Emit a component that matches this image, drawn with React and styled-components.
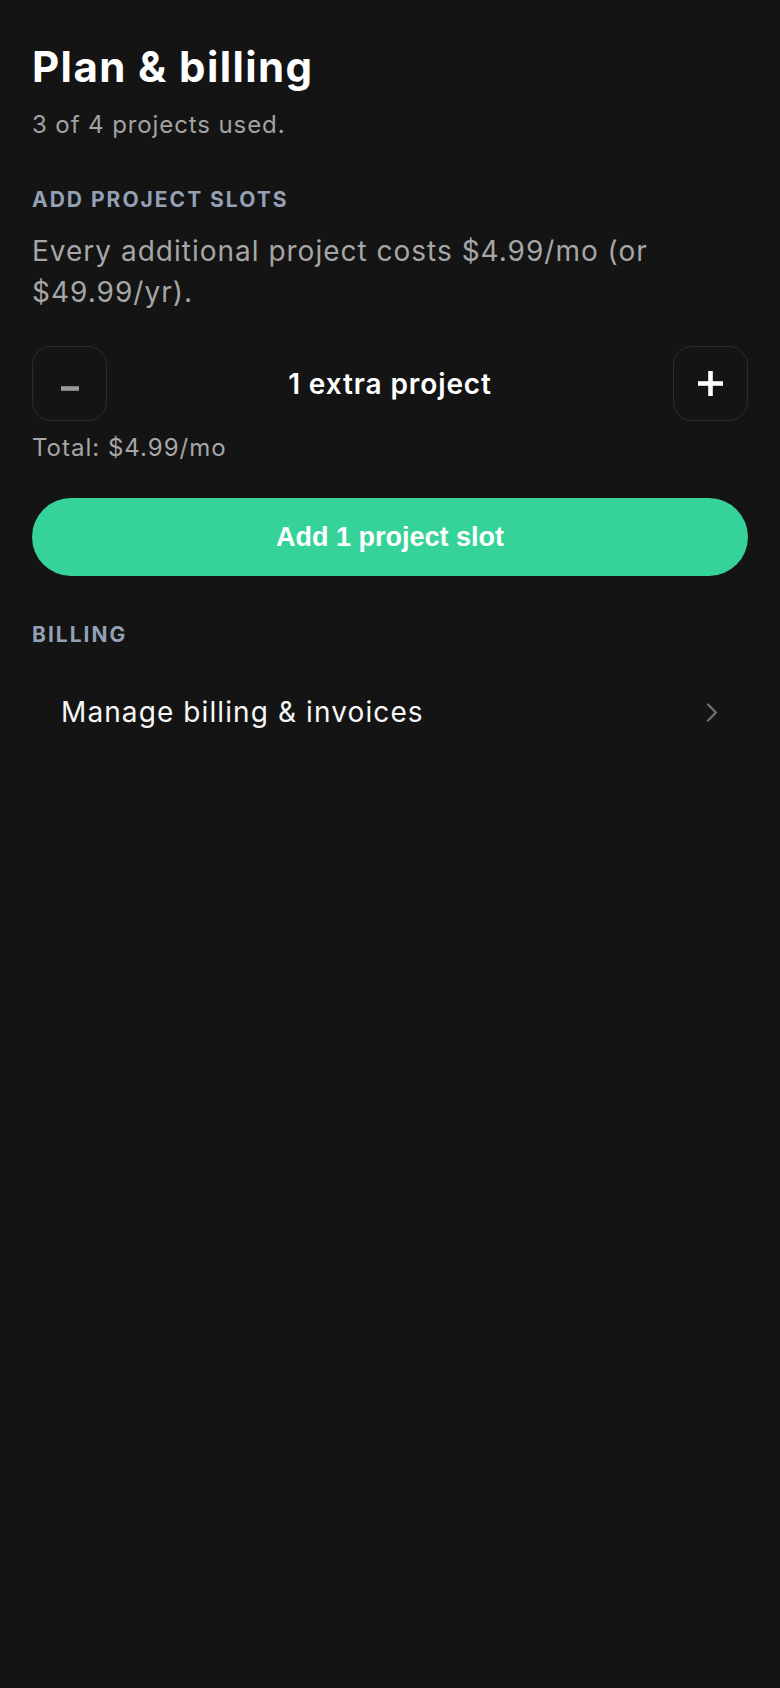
import React from "react";
import styled, { createGlobalStyle } from "styled-components";

const Global = createGlobalStyle`
  html, body { margin: 0; padding: 0; background: #141414; }
  body { font-family: Inter, "Noto Sans", sans-serif; -webkit-font-smoothing: antialiased; }
  #root { min-height: 100vh; background: #141414; }
`;

const Page = styled.main`
  box-sizing: border-box;
  min-height: 100vh;
  padding: 42px 32px 40px;
  display: flex;
  flex-direction: column;
  color: #fff;
`;

const Title = styled.h1`
  margin: 0;
  font-size: 42px;
  line-height: 50px;
  font-weight: 700;
  letter-spacing: 1.4px;
  color: #ffffff;
`;

const Subtitle = styled.p`
  margin: 17px 0 0;
  font-size: 24px;
  line-height: 32px;
  letter-spacing: 0.9px;
  color: #a3a3a3;
`;

const SectionLabel = styled.h2`
  margin: ${(p) => p.$top}px 0 0;
  font-size: 21px;
  line-height: 28px;
  font-weight: 700;
  letter-spacing: 2px;
  text-transform: uppercase;
  color: #94a0b4;
`;

const Description = styled.p`
  margin: 17px 0 0;
  font-size: 28px;
  line-height: 41px;
  letter-spacing: 1px;
  color: #a6a6a6;
`;

const Stepper = styled.div`
  margin-top: 33px;
  display: flex;
  align-items: center;
  justify-content: space-between;
`;

const StepButton = styled.button`
  width: 75px;
  height: 75px;
  box-sizing: border-box;
  border-radius: 19px;
  border: 1.5px solid #2c2c2c;
  background: transparent;
  display: flex;
  align-items: center;
  justify-content: center;
  padding: 0;
  color: ${(p) => (p.disabled ? "#9a9a9a" : "#ffffff")};
`;

const Count = styled.span`
  font-size: 28px;
  line-height: 36px;
  font-weight: 600;
  letter-spacing: 0.9px;
  color: #ffffff;
`;

const Total = styled.p`
  margin: 9px 0 0;
  font-size: 24px;
  line-height: 36px;
  letter-spacing: 1px;
  color: #a6a6a6;
`;

const PrimaryButton = styled.button`
  margin-top: 32px;
  height: 78px;
  width: 100%;
  border: none;
  border-radius: 39px;
  background: #35d399;
  color: #ffffff;
  font-family: "Liberation Sans", Arial, sans-serif;
  font-weight: 700;
  font-size: 27px;
  display: flex;
  align-items: center;
  justify-content: center;
`;

const Row = styled.div`
  margin-top: 25px;
  padding: 20px 30px 20px 29px;
  display: flex;
  align-items: center;
  justify-content: space-between;
`;

const RowLabel = styled.span`
  font-size: 28px;
  line-height: 36px;
  letter-spacing: 1.1px;
  color: #f7f7f7;
`;

const MinusIcon = () => (
  <svg width="18" height="18" viewBox="0 0 18 18" aria-hidden="true">
    <rect x="0" y="11.2" width="18" height="4.6" fill="currentColor" />
  </svg>
);

const PlusIcon = () => (
  <svg width="25" height="25" viewBox="0 0 25 25" aria-hidden="true">
    <rect x="0" y="10.2" width="25" height="4.6" fill="currentColor" />
    <rect x="10.2" y="0" width="4.6" height="25" fill="currentColor" />
  </svg>
);

const Chevron = () => (
  <svg width="12" height="19" viewBox="0 0 12 19" fill="none" aria-hidden="true">
    <polyline
      points="2,1.5 10,9.5 2,17.5"
      stroke="#727272"
      strokeWidth="2.2"
      strokeLinecap="round"
      strokeLinejoin="round"
    />
  </svg>
);

export default function App() {
  return (
    <>
      <Global />
      <Page>
        <Title>Plan &amp; billing</Title>
        <Subtitle>3 of 4 projects used.</Subtitle>

        <SectionLabel $top={45}>Add project slots</SectionLabel>
        <Description>
          Every additional project costs $4.99/mo (or $49.99/yr).
        </Description>

        <Stepper>
          <StepButton disabled aria-label="Decrease">
            <MinusIcon />
          </StepButton>
          <Count>1 extra project</Count>
          <StepButton aria-label="Increase">
            <PlusIcon />
          </StepButton>
        </Stepper>
        <Total>Total: $4.99/mo</Total>

        <PrimaryButton>Add 1 project slot</PrimaryButton>

        <SectionLabel $top={45}>Billing</SectionLabel>
        <Row>
          <RowLabel>Manage billing &amp; invoices</RowLabel>
          <Chevron />
        </Row>
      </Page>
    </>
  );
}
